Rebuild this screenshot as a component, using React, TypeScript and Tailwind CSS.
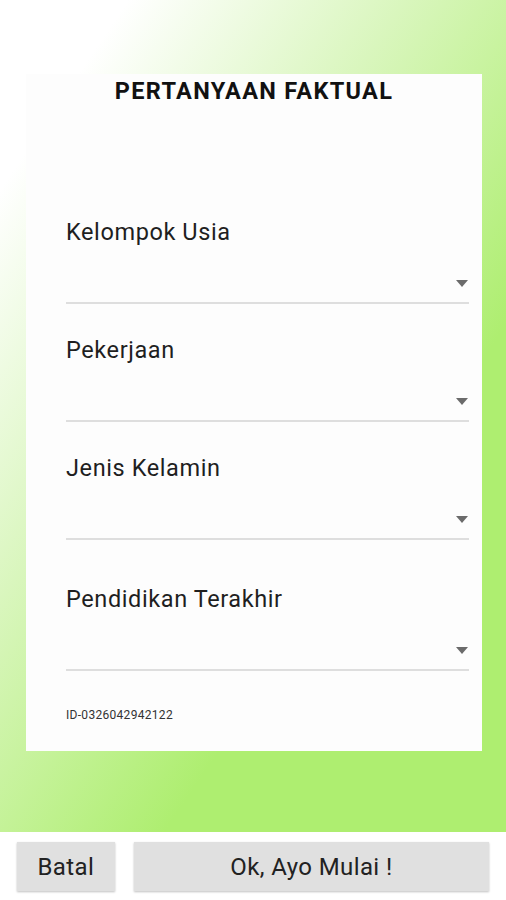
const fields = [
  { label: "Kelompok Usia", gap: "mt-[112px]" },
  { label: "Pekerjaan", gap: "mt-[31px]" },
  { label: "Jenis Kelamin", gap: "mt-[31px]" },
  { label: "Pendidikan Terakhir", gap: "mt-[44px]" },
]

function Spinner({ label, gap }: { label: string; gap: string }) {
  return (
    <div className={gap}>
      <p className="h-[30px] text-[23.5px] leading-[30px] tracking-[0.6px] text-[#1f1f1f]">{label}</p>
      <div className="flex h-[57px] items-end justify-end border-b-2 border-[#dedede] pb-[15px]">
        <span className="mr-[1px] h-0 w-0 border-x-[6px] border-t-[7px] border-x-transparent border-t-[#6b6b6b]" />
      </div>
    </div>
  )
}

export default function App() {
  return (
    <div className="flex h-[900px] w-full flex-col bg-white font-['Roboto',sans-serif]">
      <div className="flex h-[832px] flex-col bg-[linear-gradient(124deg,#ffffff_12%,#d9f6bd_38%,#aeee70_68%)] pt-[74px]">
        <div className="mx-[26px] w-[456px] bg-[#fdfdfd] pb-[28px] pl-[40px] pr-[13px]">
          <h1 className="pt-[3px] pr-[27px] text-center text-[23.5px] font-bold leading-[28px] tracking-[1.3px] text-[#111]">PERTANYAAN FAKTUAL</h1>
          {fields.map((f) => (
            <Spinner key={f.label} label={f.label} gap={f.gap} />
          ))}
          <p className="mt-[36px] text-[12px] leading-[16px] tracking-[0.3px] text-[#333]">ID-0326042942122</p>
        </div>
      </div>
      <div className="flex gap-[19px] px-[17px] pt-[10px]">
        <button type="button" className="h-[49px] w-[98px] bg-[#e0e0e0] text-[24px] tracking-[0.4px] text-[#222] shadow-[0_1px_2px_rgba(0,0,0,0.25)]">
          Batal
        </button>
        <button type="button" className="h-[49px] w-[356px] bg-[#e0e0e0] text-[24px] tracking-[0.4px] text-[#222] shadow-[0_1px_2px_rgba(0,0,0,0.25)]">
          Ok, Ayo Mulai !
        </button>
      </div>
    </div>
  )
}
